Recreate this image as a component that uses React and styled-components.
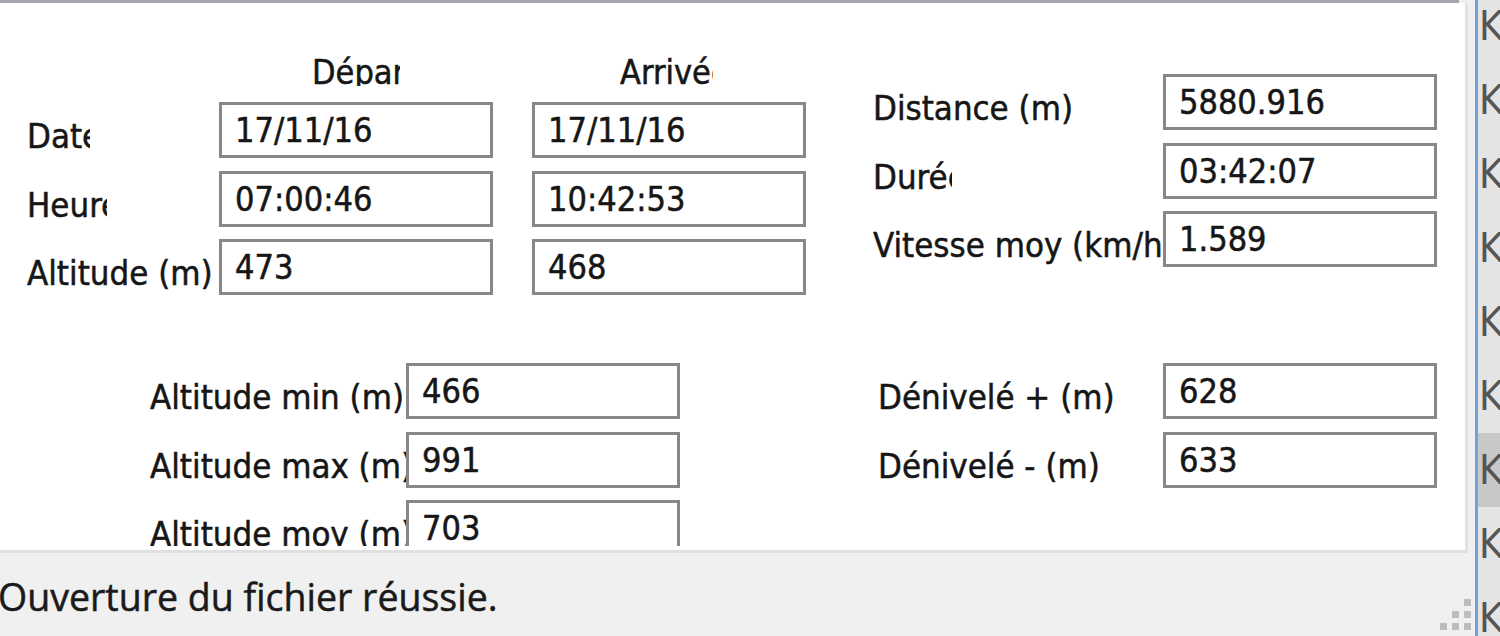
import React from 'react';
import styled, { createGlobalStyle } from 'styled-components';

const GlobalStyle = createGlobalStyle`
  html, body { margin: 0; padding: 0; }
  body { width: 1500px; height: 636px; overflow: hidden; background: #f0f0f0; }
  * { box-sizing: border-box; }
`;

const Window = styled.div`
	display: flex;
	width: 1500px;
	height: 636px;
	overflow: hidden;
	font-family: "DejaVu Sans Condensed", "DejaVu Sans", sans-serif;
	font-stretch: condensed;
	color: #161616;
	-webkit-text-stroke: 0.5px currentColor;
`;

const Main = styled.div`
	width: 1475px;
	flex: none;
	display: flex;
	flex-direction: column;
	background: #f0f0f0;
`;

const TopRule = styled.div`
	width: 1459px;
	height: 3px;
	flex: none;
	background: #a3a6ad;
`;

const Panel = styled.div`
	width: 1468px;
	height: 550px;
	flex: none;
	background: #fff;
	border-right: 3px solid #e2e2e2;
	border-bottom: 3px solid #e0e0e0;
`;

const Clip = styled.div`
	height: 543px;
	overflow: hidden;
	display: grid;
	grid-template-columns: 873px 1fr;
	grid-template-rows: 360px 1fr;
`;

const Section = styled.div`
	padding: ${props => props.pad || '0'};
`;

const HeaderRow = styled.div`
	display: grid;
	grid-template-columns: ${props => props.cols};
	height: 34px;
	margin-bottom: 16px;
`;

const Header = styled.div`
	margin-left: ${props => props.x}px;
	width: ${props => props.w}px;
	height: 34px;
	overflow: hidden;
	white-space: nowrap;
	font-size: 34px;
	line-height: 40px;
`;

const FieldGrid = styled.div`
	display: grid;
	grid-template-columns: ${props => props.cols};
	grid-auto-rows: 56px;
	row-gap: 12.5px;
`;

const Label = styled.div`
	width: ${props => (props.w ? `${props.w}px` : '100%')};
	min-width: 0;
	padding-top: 14px;
	height: 56px;
	overflow: hidden;
	white-space: nowrap;
	font-size: 34.5px;
	line-height: 40px;
`;

const Box = styled.div`
	width: 274px;
	height: 56px;
	border: 3px solid #888;
	background: #fff;
	padding-left: 13px;
	font-size: 34px;
	line-height: 50px;
	white-space: nowrap;
	overflow: hidden;
`;

const StatusBar = styled.div`
	flex: 1;
	display: flex;
	justify-content: space-between;
	font-family: "Open Sans", "Noto Sans", sans-serif;
	font-stretch: normal;
	font-size: 37.5px;
	line-height: 52px;
	color: #1a1a1a;
`;

const StatusText = styled.div`
	margin-left: -2px;
	padding-top: 18px;
	white-space: nowrap;
`;

const Grip = styled.svg`
	align-self: flex-end;
	margin: 0 4px 6px 0;
	flex: none;
`;

const Splitter = styled.div`
	width: 3px;
	flex: none;
	background: #74a0dc;
`;

const ListStrip = styled.div`
	flex: 1;
	background: #e4e4e4;
	overflow: hidden;
`;

const ListItems = styled.div`
	margin-top: -11px;
`;

const ListItem = styled.div`
	height: 74px;
	line-height: 74px;
	font-size: 41px;
	padding-left: 1px;
	color: #555;
	-webkit-text-stroke: 0;
	background: ${props => (props.selected ? '#c8c8c8' : 'transparent')};
	white-space: nowrap;
`;

const Field = ({ label, w, value }) => (
	<>
		<Label w={w}>{label}</Label>
		<Box>{value}</Box>
	</>
);

export default function App() {
	const items = Array.from({ length: 10 }, (_, i) => i);

	return (
		<>
			<GlobalStyle />
			<Window>
				<Main>
					<TopRule />
					<Panel>
						<Clip>
							<Section pad="49px 0 0 27px">
								<HeaderRow cols="192px 313px 274px">
									<div />
									<Header x={93} w={88}>Départ</Header>
									<Header x={88} w={93}>Arrivée</Header>
								</HeaderRow>
								<FieldGrid cols="192px 313px 274px">
									<Label w={63}>Date</Label>
									<Box>17/11/16</Box>
									<Box>17/11/16</Box>
									<Label w={80}>Heure</Label>
									<Box>07:00:46</Box>
									<Box>10:42:53</Box>
									<Label>Altitude (m)</Label>
									<Box>473</Box>
									<Box>468</Box>
								</FieldGrid>
							</Section>

							<Section pad="71px 0 0 0">
								<FieldGrid cols="290px 274px">
									<Field label="Distance (m)" value="5880.916" />
									<Field label="Durée" w={79} value="03:42:07" />
									<Field label="Vitesse moy (km/h)" value="1.589" />
								</FieldGrid>
							</Section>

							<Section pad="0 0 0 150px">
								<FieldGrid cols="256px 274px">
									<Field label="Altitude min (m)" value="466" />
									<Field label="Altitude max (m)" value="991" />
									<Field label="Altitude moy (m)" value="703" />
								</FieldGrid>
							</Section>

							<Section pad="0 0 0 5px">
								<FieldGrid cols="285px 274px">
									<Field label="Dénivelé + (m)" value="628" />
									<Field label="Dénivelé - (m)" value="633" />
								</FieldGrid>
							</Section>
						</Clip>
					</Panel>

					<StatusBar>
						<StatusText>Ouverture du fichier réussie.</StatusText>
						<Grip width="31" height="31" viewBox="0 0 31 31">
							<g fill="#bdbdbd">
								<rect x="24" y="0" width="7" height="7" />
								<rect x="12" y="12" width="7" height="7" />
								<rect x="24" y="12" width="7" height="7" />
								<rect x="0" y="24" width="7" height="7" />
								<rect x="12" y="24" width="7" height="7" />
								<rect x="24" y="24" width="7" height="7" />
							</g>
						</Grip>
					</StatusBar>
				</Main>

				<Splitter />

				<ListStrip>
					<ListItems>
						{items.map(i => (
							<ListItem key={i} selected={i === 6}>K</ListItem>
						))}
					</ListItems>
				</ListStrip>
			</Window>
		</>
	);
}
